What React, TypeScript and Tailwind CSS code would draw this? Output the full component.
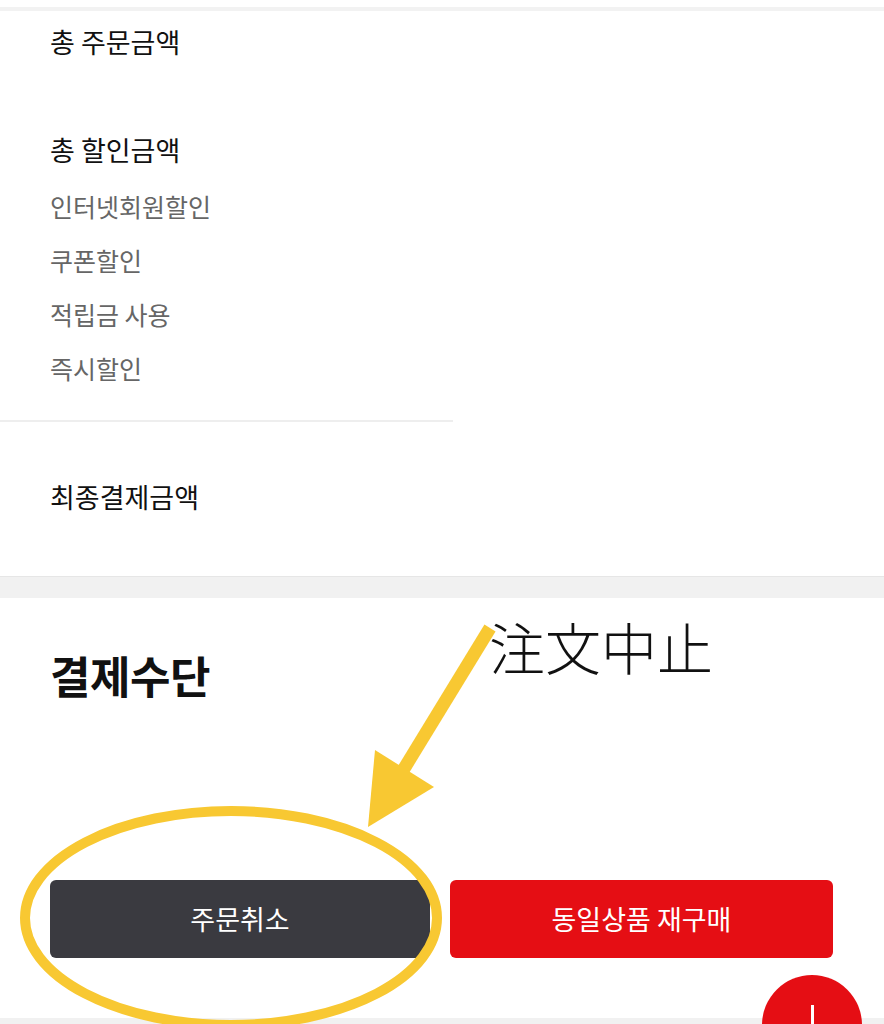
import React from "react";

const font = { fontFamily: '"Noto Sans CJK KR", "Noto Sans", sans-serif' };

function Row({ label, muted }: { label: string; muted?: boolean }) {
  return (
    <div
      className={`h-[54px] flex items-center px-[50px] ${
        muted ? "text-[25px] text-[#666666]" : "text-[27px] text-[#111111]"
      }`}
    >
      {label}
    </div>
  );
}

export default function App() {
  return (
    <div className="relative w-[884px] h-[1024px] overflow-hidden bg-white" style={font}>
      {/* top edge */}
      <div className="h-[7px]" />
      <div className="h-[4px] bg-[#f2f2f2]" />

      {/* amounts */}
      <div className="pt-[4px]">
        <Row label="총 주문금액" />
        <div className="mt-[54px]">
          <Row label="총 할인금액" />
        </div>
        <div className="mt-[3px]">
          <Row label="인터넷회원할인" muted />
          <Row label="쿠폰할인" muted />
          <Row label="적립금 사용" muted />
          <Row label="즉시할인" muted />
        </div>
        <div className="mt-[24px] h-[2px] w-[453px] bg-[#eeeeee]" />
        <div className="mt-[48px]">
          <Row label="최종결제금액" />
        </div>
      </div>

      <div className="mt-[52px] h-[22px] bg-[#f1f1f1] border-t border-[#e6e6e6]" />

      {/* payment */}
      <div className="mt-[47px] h-[60px] flex items-center px-[50px] text-[44px] font-bold tracking-[-0.5px] text-[#111111]">
        결제수단
      </div>

      <div className="mt-[175px] flex gap-[20px] pl-[50px] pr-[51px]">
        <button className="w-[380px] h-[78px] rounded-md bg-[#3a3a40] text-white text-[27px]">
          주문취소
        </button>
        <button className="w-[383px] h-[78px] rounded-md bg-[#e50e14] text-white text-[27px]">
          동일상품 재구매
        </button>
      </div>

      <div className="mt-[60px] h-[10px] bg-[#f1f1f1]" />

      {/* floating button */}
      <div className="absolute left-[762px] top-[975px] w-[100px] h-[100px] rounded-full bg-[#e50e14] flex justify-center">
        <div className="mt-[30px] w-[3px] h-[40px] bg-white" />
      </div>

      {/* annotation */}
      <svg className="absolute left-0 top-0" width="884" height="1024" viewBox="0 0 884 1024">
        <ellipse cx="231" cy="918" rx="206" ry="107" fill="none" stroke="#f8c832" strokeWidth="10" />
        <line x1="490" y1="628" x2="402" y2="772" stroke="#f8c832" strokeWidth="13" />
        <polygon points="368,827 375,750 434,787" fill="#f8c832" />
      </svg>
      <div
        className="absolute left-[489px] top-[606px] text-[56px] leading-[80px] text-[#111111]"
        style={{ fontFamily: '"Noto Sans CJK JP", sans-serif', fontWeight: 300 }}
      >
        注文中止
      </div>
    </div>
  );
}
